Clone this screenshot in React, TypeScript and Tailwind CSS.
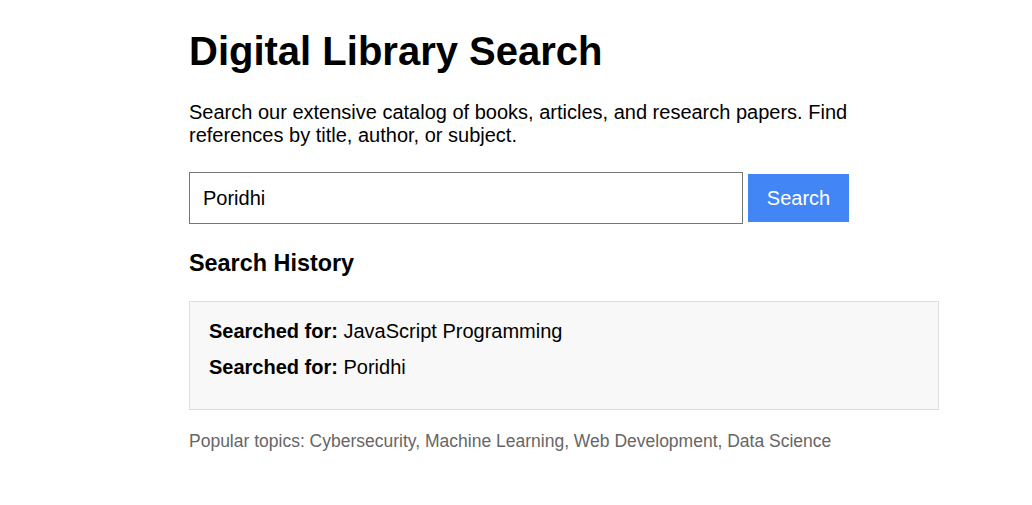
import { useState } from 'react'

const history = ['JavaScript Programming', 'Poridhi']

export default function App() {
  const [query, setQuery] = useState('Poridhi')

  return (
    <div className="min-h-screen bg-white font-['Liberation_Sans',Arial,sans-serif] text-black">
      <div className="ml-[189px] w-[750px] pt-[28px]">
        <h1 className="text-[40px] font-bold leading-[46px]">Digital Library Search</h1>

        <p className="mt-[27px] text-[20px] leading-[23px]">
          Search our extensive catalog of books, articles, and research papers. Find references by
          title, author, or subject.
        </p>

        <div className="mt-[25px] flex items-center gap-[5px]">
          <input
            type="text"
            value={query}
            onChange={(e) => setQuery(e.target.value)}
            className="h-[52px] w-[554px] border border-[#767676] px-[13px] text-[20px] outline-none"
          />
          <button
            type="button"
            className="h-[48px] w-[101px] bg-[#4285f4] text-[20px] text-white"
          >
            Search
          </button>
        </div>

        <h3 className="mt-[26px] text-[23.4px] font-bold leading-[27px]">Search History</h3>

        <div className="mt-[24px] flex flex-col gap-[13px] border border-[#dddddd] bg-[#f8f8f8] px-[19px] pb-[30px] pt-[18px]">
          {history.map((item) => (
            <p key={item} className="text-[20px] leading-[23px]">
              <strong>Searched for:</strong> {item}
            </p>
          ))}
        </div>

        <p className="mt-[21px] text-[17.5px] leading-[20px] text-[#666666]">
          Popular topics: Cybersecurity, Machine Learning, Web Development, Data Science
        </p>
      </div>
    </div>
  )
}
